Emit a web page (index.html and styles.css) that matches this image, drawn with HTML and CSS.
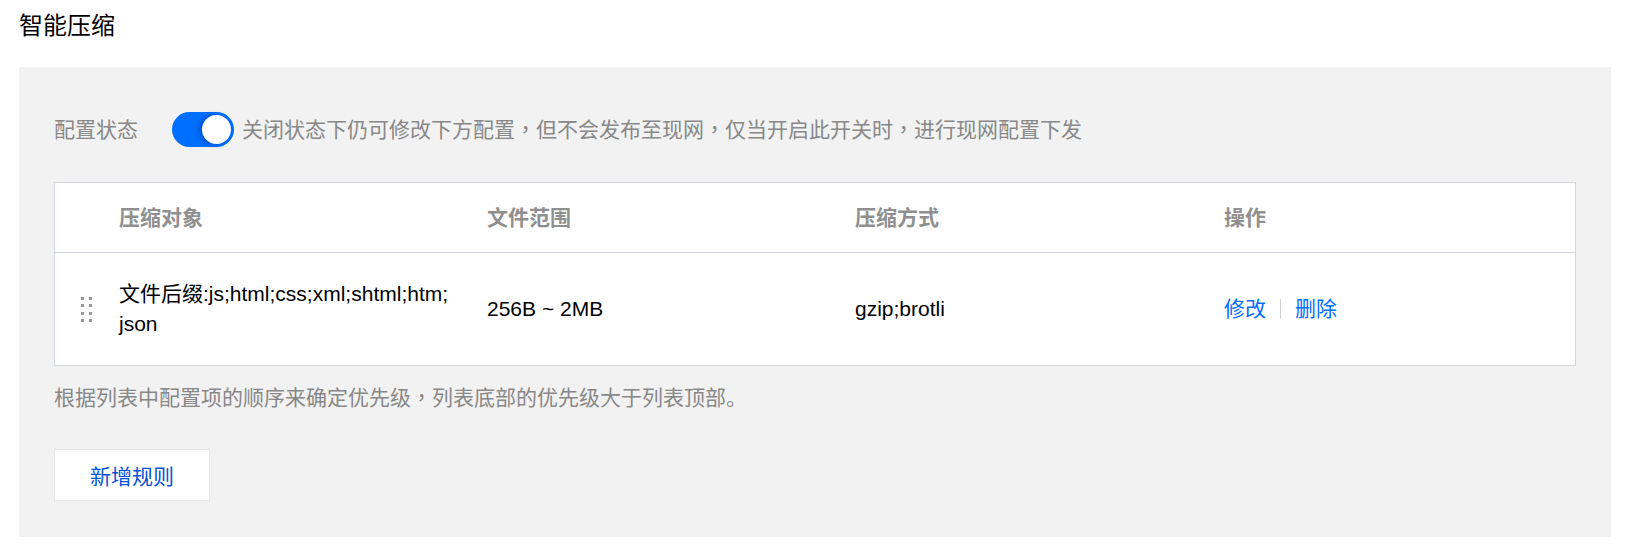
FILE: index.html
```html
<!DOCTYPE html>
<html lang="zh-CN">
<head>
<meta charset="utf-8">
<title>智能压缩</title>
<link rel="stylesheet" href="styles.css">
</head>
<body>
<div class="page">
  <h2 class="title">智能压缩</h2>
  <section class="panel">
    <div class="status-row">
      <span class="label">配置状态</span>
      <span class="switch"><span class="knob"></span></span>
      <span class="desc">关闭状态下仍可修改下方配置<span class="punct" lang="zh-TW">，</span>但不会发布至现网<span class="punct" lang="zh-TW">，</span>仅当开启此开关时<span class="punct" lang="zh-TW">，</span>进行现网配置下发</span>
    </div>

    <div class="table">
      <div class="row head">
        <div class="cell drag-col"></div>
        <div class="cell">压缩对象</div>
        <div class="cell">文件范围</div>
        <div class="cell">压缩方式</div>
        <div class="cell">操作</div>
      </div>
      <div class="row body">
        <div class="cell drag-col">
          <svg class="drag" width="11" height="25" viewBox="0 0 11 25">
            <rect x="0" y="0" width="3" height="3"/><rect x="8" y="0" width="3" height="3"/>
            <rect x="0" y="7" width="3" height="3"/><rect x="8" y="7" width="3" height="3"/>
            <rect x="0" y="15" width="3" height="3"/><rect x="8" y="15" width="3" height="3"/>
            <rect x="0" y="22" width="3" height="3"/><rect x="8" y="22" width="3" height="3"/>
          </svg>
        </div>
        <div class="cell">文件后缀:js;<wbr>html;<wbr>css;<wbr>xml;<wbr>shtml;<wbr>htm;<wbr>json</div>
        <div class="cell">256B ~ 2MB</div>
        <div class="cell">gzip;brotli</div>
        <div class="cell actions">
          <a class="link">修改</a>
          <span class="sep"></span>
          <a class="link">删除</a>
        </div>
      </div>
    </div>

    <p class="hint">根据列表中配置项的顺序来确定优先级<span class="punct" lang="zh-TW">，</span>列表底部的优先级大于列表顶部。</p>

    <button class="btn">新增规则</button>
  </section>
</div>
</body>
</html>
```

FILE: styles.css
```css
* { box-sizing: border-box; }

html, body {
  margin: 0;
  padding: 0;
  background: #ffffff;
}

body {
  font-family: "Liberation Sans", "Noto Sans CJK SC", sans-serif;
  font-size: 21px;
  color: #000;
}

.page {
  padding: 0 20px 0 19px;
}

.title {
  margin: 0;
  padding-top: 9px;
  font-size: 24px;
  line-height: 34px;
  font-weight: normal;
  color: #000;
}

.panel {
  margin-top: 24px;
  background: #f2f2f2;
  padding: 45px 35px 36px 35px;
  height: 470px;
}

.status-row {
  display: flex;
  align-items: center;
  height: 35px;
}

.label {
  width: 118px;
  color: #888;
  line-height: 30px;
}

.switch {
  width: 62px;
  height: 35px;
  border-radius: 18px;
  background: #006eff;
  padding: 3px;
  display: flex;
  justify-content: flex-end;
  align-items: center;
  flex: none;
}

.knob {
  width: 29px;
  height: 29px;
  border-radius: 50%;
  background: #fff;
  box-shadow: -3px 0 5px rgba(0, 30, 110, 0.35);
}

.desc {
  margin-left: 8px;
  color: #888;
  line-height: 30px;
  height: 30px;
}

.punct {
  font-family: "Noto Sans CJK TC", "Noto Sans CJK SC", sans-serif;
  line-height: 1;
}

.table {
  margin-top: 35px;
  background: #fff;
  border: 1px solid #d3d7de;
}

.row {
  display: grid;
  grid-template-columns: 40px 368px 368px 369px 1fr;
  align-items: center;
}

.row.head {
  height: 70px;
  border-bottom: 1px solid #d3d7de;
  font-weight: bold;
  color: #8f8f8f;
}

.row.body {
  height: 112px;
}

.cell {
  padding-left: 24px;
  line-height: 30px;
}

.cell.drag-col {
  padding-left: 26px;
  display: flex;
  align-items: center;
}

.drag {
  fill: #999;
  display: block;
}

.actions {
  display: flex;
  align-items: center;
}

.link {
  color: #006eff;
  cursor: pointer;
}

.sep {
  width: 1px;
  height: 20px;
  background: #d0d0d0;
  margin: 0 14px;
}

.hint {
  margin: 18px 0 0 0;
  color: #888;
  line-height: 28px;
  height: 28px;
}

.btn {
  display: block;
  margin-top: 37px;
  width: 156px;
  height: 52px;
  background: #fff;
  border: 1px solid #e6e6e6;
  font-family: "Liberation Sans", "Noto Sans CJK SC", sans-serif;
  font-size: 21px;
  color: #0052d9;
  padding: 0;
  cursor: pointer;
}
```
